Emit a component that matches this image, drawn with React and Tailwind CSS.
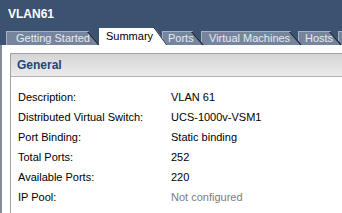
const tabs = [
  { label: 'Getting Started', w: 'w-[94px] pl-[9px] ml-[6px] z-[6]' },
  { label: 'Summary', w: 'w-[68px] pl-[7px] -ml-[1px] z-[9]', active: true },
  { label: 'Ports', w: 'w-[42px] pl-[5px] -ml-[5px] z-[4]' },
  { label: 'Virtual Machines', w: 'w-[101px] pl-[7px] -ml-[3px] z-[3]' },
  { label: 'Hosts', w: 'w-[44px] pl-[6px] -ml-[4px] z-[2]' },
  { label: '', w: 'w-[20px] -ml-[4px] z-[1]' },
];

const rows = [
  ['Description:', 'VLAN 61'],
  ['Distributed Virtual Switch:', 'UCS-1000v-VSM1'],
  ['Port Binding:', 'Static binding'],
  ['Total Ports:', '252'],
  ['Available Ports:', '220'],
  ['IP Pool:', 'Not configured', true],
];

const Tab = ({ label, w, active }) => (
  <div
    className={
      'relative shrink-0 whitespace-nowrap overflow-hidden [clip-path:polygon(0_0,calc(100%-12px)_0,100%_100%,0_100%)] ' +
      w +
      (active
        ? ' h-[17px] leading-[17px] bg-white text-black'
        : ' h-[14px] mt-[3px] leading-[13px] bg-[#76849d] text-[#e6eaf0] border-t border-l border-[#a7b1c3]')
    }
  >
    {label}
    <svg className="absolute top-0 right-0" width="13" height="17" viewBox="0 0 13 17">
      <line x1="0" y1="-1" x2="13" y2={active ? 17 : 14} stroke="#1c2838" strokeWidth="1.4" />
    </svg>
  </div>
);

const App = () => {
  return (
    <div className="w-[342px] h-[213px] overflow-hidden bg-[#3c5271] flex flex-col font-['Liberation_Sans',sans-serif] text-[11px]">
      <div className="h-[28px] shrink-0 px-[8px] pt-[7px] text-white font-bold text-[12px] leading-[14px]">VLAN61</div>

      {/* tab strip */}
      <div className="flex items-start h-[17px] shrink-0 text-[11px]">
        {tabs.map((t, i) => (
          <Tab key={i} {...t} />
        ))}
      </div>

      <div className="flex-1 bg-white border-l-[2px] border-[#858b93] pt-[8px] pl-[8px]">
        <div className="h-full border-t border-l border-[#a3a3a3] flex flex-col">
          <div className="h-[23px] shrink-0 bg-gradient-to-b from-[#d5d5d5] to-[#ebebeb] border-b border-[#b3b3b3] pl-[6px] flex items-center font-bold text-[12px] text-[#1b477b]">
            General
          </div>
          <div className="pl-[7px] pt-[12px] flex flex-col">
            {rows.map(([k, v, muted]) => (
              <div key={k} className="flex h-[20px] items-start">
                <div className="w-[153px] text-black">{k}</div>
                <div className={muted ? 'text-[#7c7c7c]' : 'text-black'}>{v}</div>
              </div>
            ))}
          </div>
        </div>
      </div>
    </div>
  );
};

export default App;
